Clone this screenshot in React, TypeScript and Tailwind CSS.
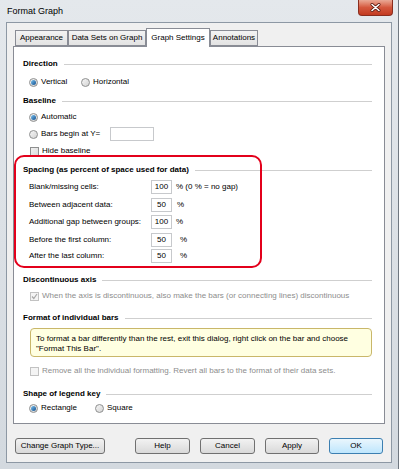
import React from "react";

interface RadioProps {
  checked?: boolean;
  label: string;
  className?: string;
}

const Radio: React.FC<RadioProps> = ({ checked, label, className }) => {
  return (
    <div className={`flex items-center ${className ?? ""}`}>
      <span className="flex h-[9px] w-[9px] shrink-0 items-center justify-center rounded-full border border-[#8e8f8f] bg-gradient-to-br from-[#f6f6f6] to-[#d4d4d4]">
        {checked && (
          <span className="h-[5px] w-[5px] rounded-full bg-gradient-to-br from-[#7cc4f0] to-[#0d4f8f]" />
        )}
      </span>
      <span className="ml-[3px]">{label}</span>
    </div>
  );
};

interface CheckProps {
  checked?: boolean;
  disabled?: boolean;
  label: string;
}

const Checkbox: React.FC<CheckProps> = ({ checked, disabled, label }) => {
  return (
    <div className={`flex items-center ${disabled ? "text-[#8d8d8d]" : ""}`}>
      <span
        className={`flex h-[9px] w-[9px] shrink-0 items-center justify-center border ${
          disabled
            ? "border-[#c2c2c2] bg-[#f4f4f4]"
            : "border-[#8e8f8f] bg-gradient-to-br from-[#f0f0f0] to-[#dcdcdc]"
        }`}
      >
        {checked && (
          <svg width="7" height="7" viewBox="0 0 7 7">
            <path d="M1 3.5 L2.8 5.5 L6 1" fill="none" stroke="#a8a8a8" strokeWidth="1.2" />
          </svg>
        )}
      </span>
      <span className="ml-[3px]">{label}</span>
    </div>
  );
};

const Heading: React.FC<{ children: React.ReactNode; className?: string }> = ({ children, className }) => {
  return (
    <div className={`flex h-[12px] items-center ${className ?? ""}`}>
      <span className="font-bold">{children}</span>
      <span className="ml-[6px] h-px flex-1 bg-[#cfcfcf]" />
    </div>
  );
};

interface SpacingRowProps {
  label: string;
  value: string;
  suffix: string;
  suffixGap: string;
  className: string;
}

const SpacingRow: React.FC<SpacingRowProps> = ({ label, value, suffix, suffixGap, className }) => {
  return (
    <div className={`ml-[6px] flex h-[14px] items-center ${className}`}>
      <span className="w-[122px] shrink-0">{label}</span>
      <span className="flex h-[14px] w-[21px] items-center justify-center border border-[#c7c9cc] bg-white">
        {value}
      </span>
      <span className={suffixGap}>{suffix}</span>
    </div>
  );
};

const tabs = [
  { name: "Appearance", w: "w-[53px]" },
  { name: "Data Sets on Graph", w: "w-[78px]" },
  { name: "Graph Settings", w: "w-[64px]", active: true },
  { name: "Annotations", w: "w-[48px]" },
];

const Button: React.FC<{ label: string; w: string; primary?: boolean }> = ({ label, w, primary }) => {
  return (
    <div
      className={`flex h-[16px] ${w} items-center justify-center rounded-[3px] border ${
        primary
          ? "border-[#3c7fb1] bg-gradient-to-b from-[#eaf6fd] to-[#bee6fd]"
          : "border-[#707070] bg-gradient-to-b from-[#f2f2f2] to-[#d9d9d9]"
      }`}
    >
      {label}
    </div>
  );
};

export default function App() {
  return (
    <div className="relative h-[469px] w-[399px] overflow-hidden border-r border-[#6f7780] bg-gradient-to-b from-[#e4e8ec] to-[#d3d9df] font-['Liberation_Sans',Arial,sans-serif] text-[8px] leading-none text-black">
      {/* Title bar */}
      <div className="flex h-[22px] items-center pl-[7px]">
        <span className="text-[9px]">Format Graph</span>
      </div>

      {/* Close button */}
      <div className="absolute right-[5px] top-0 flex h-[16px] w-[35px] items-center justify-center rounded-b-[4px] border border-t-0 border-[#8a2d1e] bg-gradient-to-b from-[#e9a895] via-[#d4573d] to-[#c23a20]">
        <svg width="11" height="9" viewBox="0 0 11 9">
          <path d="M2 1.5 L9 7.5 M9 1.5 L2 7.5" stroke="#5a1a10" strokeWidth="3" strokeLinecap="round" />
          <path d="M2 1.5 L9 7.5 M9 1.5 L2 7.5" stroke="#ffffff" strokeWidth="1.6" strokeLinecap="round" />
        </svg>
      </div>

      {/* Client area */}
      <div className="mx-[6px] h-[441px] border border-[#8d98a4] bg-[#f0f0f0] px-[6px] pt-[5px]">
        {/* Tabs */}
        <div className="flex h-[18px] items-end pl-[2px]">
          {tabs.map((t) =>
            t.active ? (
              <div
                key={t.name}
                className={`relative z-10 -mb-px flex h-[19px] ${t.w} items-center justify-center border border-b-0 border-[#898c95] bg-white`}
              >
                {t.name}
              </div>
            ) : (
              <div
                key={t.name}
                className={`flex h-[16px] ${t.w} items-center justify-center border border-[#898c95] bg-gradient-to-b from-[#f3f3f3] to-[#e3e3e3]`}
              >
                {t.name}
              </div>
            )
          )}
        </div>

        {/* Panel */}
        <div className="relative flex h-[378px] flex-col border border-[#898c95] bg-white pl-[9px] pr-[12px]">
          <Heading className="mt-[11px]">Direction</Heading>
          <div className="ml-[6px] mt-[6px] flex h-[12px] items-center">
            <Radio checked label="Vertical" className="w-[52px]" />
            <Radio label="Horizontal" />
          </div>

          <Heading className="mt-[7px]">Baseline</Heading>
          <div className="ml-[6px] mt-[4px] flex h-[12px] items-center">
            <Radio checked label="Automatic" />
          </div>
          <div className="ml-[6px] mt-[4px] flex h-[14px] items-center">
            <Radio label="Bars begin at Y=" className="w-[81px]" />
            <span className="h-[14px] w-[44px] border border-[#c7c9cc] bg-white" />
          </div>
          <div className="ml-[7px] mt-[4px] flex h-[12px] items-center">
            <Checkbox label="Hide baseline" />
          </div>

          <Heading className="mt-[7px]">Spacing (as percent of space used for data)</Heading>
          <SpacingRow className="mt-[4px]" label="Blank/missing cells:" value="100" suffix="% (0 % = no gap)" suffixGap="ml-[4px]" />
          <SpacingRow className="mt-[4px]" label="Between adjacent data:" value="50" suffix="%" suffixGap="ml-[5px]" />
          <SpacingRow className="mt-[3px]" label="Additional gap between groups:" value="100" suffix="%" suffixGap="ml-[4px]" />
          <SpacingRow className="mt-[4px]" label="Before the first column:" value="50" suffix="%" suffixGap="ml-[8px]" />
          <SpacingRow className="mt-[2px]" label="After the last column:" value="50" suffix="%" suffixGap="ml-[8px]" />

          <Heading className="mt-[11px]">Discontinuous axis</Heading>
          <div className="ml-[7px] mt-[4px] flex h-[12px] items-center">
            <Checkbox checked disabled label="When the axis is discontinuous, also make the bars (or connecting lines) discontinuous" />
          </div>

          <Heading className="mt-[10px]">Format of individual bars</Heading>
          <div className="ml-[7px] mt-[4px] h-[29px] rounded-[4px] border border-[#c9b76a] bg-[#ffffe1] pl-[5px] pt-[5px] leading-[10px]">
            To format a bar differently than the rest, exit this dialog, right click on the bar and choose
            <br />
            "Format This Bar".
          </div>
          <div className="ml-[7px] mt-[8px] flex h-[12px] items-center">
            <Checkbox disabled label="Remove all the individual formatting. Revert all bars to the format of their data sets." />
          </div>

          <Heading className="mt-[11px]">Shape of legend key</Heading>
          <div className="ml-[6px] mt-[2px] flex h-[12px] items-center">
            <Radio checked label="Rectangle" className="w-[66px]" />
            <Radio label="Square" />
          </div>

          {/* Annotation highlight */}
          <div className="absolute left-0 top-[108px] h-[113px] w-[248px] rounded-[10px] border-2 border-[#e3001b]" />
        </div>

        {/* Buttons */}
        <div className="mt-[14px] flex items-center pl-[2px] pr-[2px]">
          <Button label="Change Graph Type..." w="w-[90px]" />
          <div className="flex-1" />
          <div className="flex gap-[10px]">
            <Button label="Help" w="w-[55px]" />
            <Button label="Cancel" w="w-[55px]" />
            <Button label="Apply" w="w-[54px]" />
            <Button label="OK" w="w-[54px]" primary />
          </div>
        </div>
      </div>
    </div>
  );
}
